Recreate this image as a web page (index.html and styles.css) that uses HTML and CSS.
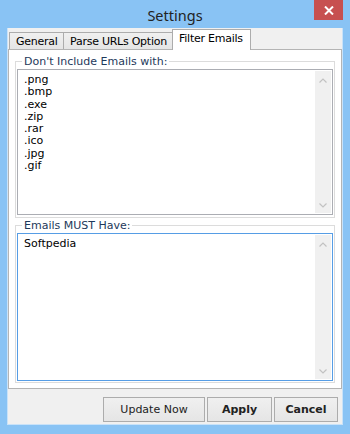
FILE: index.html
```html
<!DOCTYPE html>
<html lang="en">
<head>
  <meta charset="UTF-8" />
  <title>Settings</title>
  <link rel="stylesheet" href="styles.css">
</head>
<body>
  <div class="window">
    <div class="titlebar">
      <span class="title">Settings</span>
      <button class="close">
        <svg width="10" height="9" viewBox="0 0 10 9"><path d="M1 0.5 L9 8.5 M9 0.5 L1 8.5" stroke="#fff" stroke-width="2" fill="none"/></svg>
      </button>
    </div>

    <div class="client">
      <div class="tabs">
        <div class="tab tab-general">General</div>
        <div class="tab tab-parse">Parse URLs Option</div>
        <div class="tab tab-filter active">Filter Emails</div>
      </div>

      <div class="panel">
        <fieldset class="group group-exclude">
          <legend>Don't Include Emails with:</legend>
          <div class="textbox">
            <div class="textbox-text">.png<br>.bmp<br>.exe<br>.zip<br>.rar<br>.ico<br>.jpg<br>.gif</div>
            <div class="scrollbar">
              <svg width="8" height="5" viewBox="0 0 8 5"><polyline points="0.5,4.5 4,1 7.5,4.5" /></svg>
              <svg width="8" height="5" viewBox="0 0 8 5"><polyline points="0.5,0.5 4,4 7.5,0.5" /></svg>
            </div>
          </div>
        </fieldset>

        <fieldset class="group group-must">
          <legend>Emails MUST Have:</legend>
          <div class="textbox">
            <div class="textbox-text">Softpedia</div>
            <div class="scrollbar">
              <svg width="8" height="5" viewBox="0 0 8 5"><polyline points="0.5,4.5 4,1 7.5,4.5" /></svg>
              <svg width="8" height="5" viewBox="0 0 8 5"><polyline points="0.5,0.5 4,4 7.5,0.5" /></svg>
            </div>
          </div>
        </fieldset>
      </div>

      <div class="buttons">
        <button class="btn btn-update">Update Now</button>
        <button class="btn btn-apply">Apply</button>
        <button class="btn btn-cancel">Cancel</button>
      </div>
    </div>
  </div>
</body>
</html>
```

FILE: styles.css
```css
* {
  margin: 0;
  padding: 0;
  box-sizing: border-box;
}

body {
  background-color: #89c3f4;
  font-family: "DejaVu Sans", Tahoma, sans-serif;
  font-size: 11px;
  color: #000;
}

.window {
  width: 350px;
  height: 434px;
  padding: 0 7px 9px;
  background-color: #89c3f4;
  display: flex;
  flex-direction: column;
}

.titlebar {
  height: 28px;
  display: grid;
  grid-template-columns: 1fr auto 1fr;
}

.title {
  grid-column: 2;
  align-self: center;
  padding-top: 2px;
  font-family: "Noto Sans", sans-serif;
  font-size: 14.5px;
  color: #222;
}

.close {
  grid-column: 3;
  justify-self: end;
  width: 29px;
  height: 20px;
  border: none;
  background-color: #c75050;
  display: flex;
  align-items: center;
  justify-content: center;
}

.client {
  flex: 1;
  background-color: #f0f0f0;
  border: 1px solid #c9e2f8;
  border-top: none;
  display: flex;
  flex-direction: column;
}

/* tab strip */
.tabs {
  height: 21px;
  padding: 1px 0 0 1px;
  display: flex;
  align-items: flex-end;
}

.tab {
  height: 17px;
  padding: 2px 0 0 6px;
  border: 1px solid #acacac;
  border-bottom: none;
  background: linear-gradient(#f0f0f0, #e5e5e5);
  white-space: nowrap;
  letter-spacing: -0.25px;
  color: #000;
}

.tab + .tab {
  margin-left: -1px;
}

.tab-general { width: 55px; }
.tab-parse { width: 110px; }
.tab-filter { width: 79px; }

.tab.active {
  height: 21px;
  margin-bottom: -1px;
  background: #fff;
  position: relative;
  z-index: 1;
}

.panel {
  height: 340px;
  border: 1px solid #b4b4b4;
  background-color: #fff;
  padding: 5px 6px 0;
}

/* group boxes */
.group {
  border: 1px solid #dcdcdc;
  padding: 1px 1px 2px;
  min-width: 0;
}

.group legend {
  margin-left: 5px;
  padding: 0 2px;
  line-height: 13px;
  color: #1e395b;
}

.group-must {
  margin-top: 1px;
  padding-bottom: 1px;
}

.textbox {
  display: flex;
  border: 1px solid #abadb3;
  background-color: #fff;
  padding: 1px;
}

.group-exclude .textbox {
  height: 146px;
}

.group-must .textbox {
  height: 148px;
  border-color: #569de5;
}

.textbox-text {
  flex: 1;
  padding: 3px 0 0 5px;
  line-height: 12.3px;
}

.scrollbar {
  width: 16px;
  background-color: #f0f0f0;
  display: flex;
  flex-direction: column;
  justify-content: space-between;
  align-items: center;
  padding: 7px 0 5px;
}

.scrollbar polyline {
  fill: none;
  stroke: #c2c2c2;
  stroke-width: 1.2;
}

/* dialog buttons */
.buttons {
  display: flex;
  justify-content: flex-end;
  gap: 2px;
  padding: 8px 4px 2px 0;
}

.btn {
  height: 25px;
  border: 1px solid #acacac;
  background: linear-gradient(#f0f0f0, #e5e5e5);
  font: inherit;
  color: #222;
}

.btn-update { width: 102px; }

.btn-apply {
  width: 65px;
  font-weight: bold;
}

.btn-cancel {
  width: 64px;
  font-weight: bold;
}
```
